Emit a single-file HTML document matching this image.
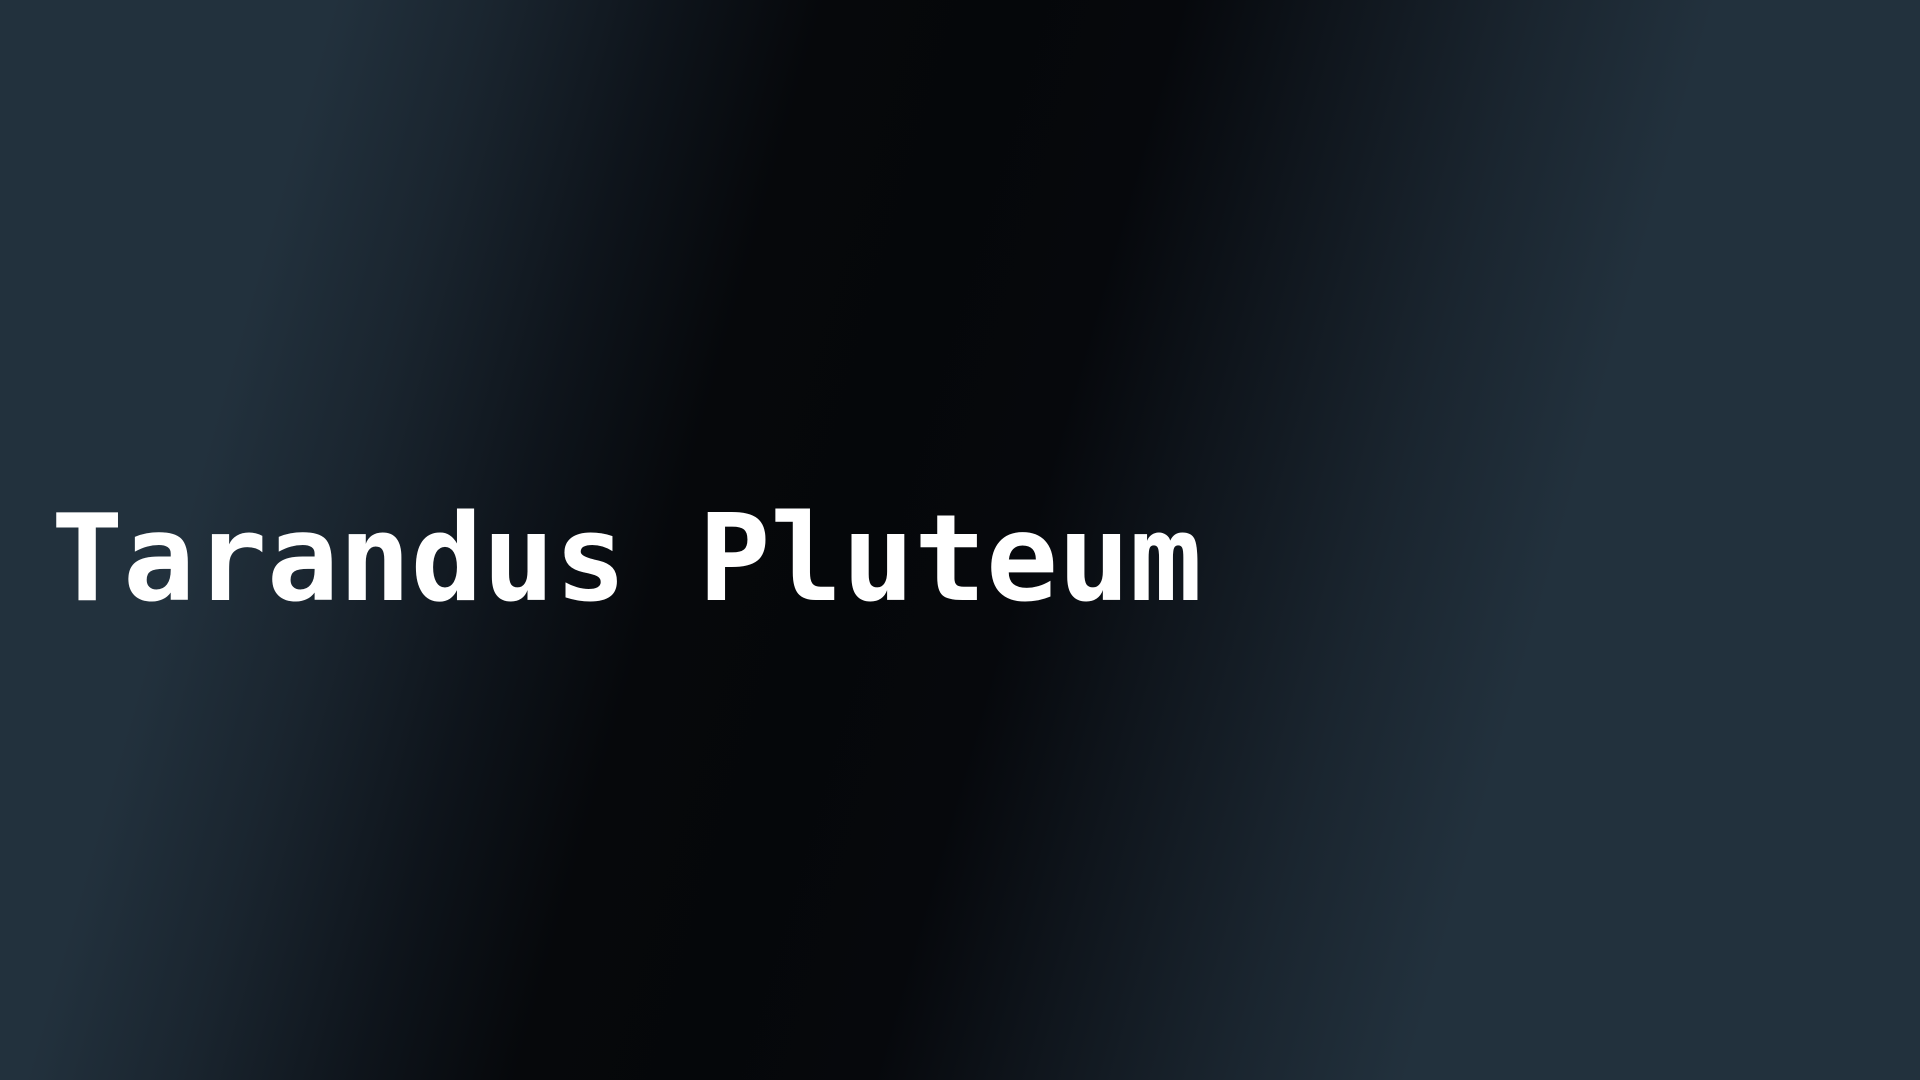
<!DOCTYPE html>
<html>
<head>
<meta charset="utf-8">
<style>
html,body{margin:0;padding:0;}
body{
  width:1920px;height:1080px;overflow:hidden;position:relative;
  background:linear-gradient(106deg,#22313d 0%,#22313d 15%,#1a252f 22%,#0e141b 30%,#06080b 37%,#05070a 45%,#06080c 53%,#0f151c 60%,#1a252f 69%,#22313d 77%,#22313d 100%);
}
h1{
  position:absolute;left:51px;top:500px;margin:0;
  font-family:"DejaVu Sans Mono","Liberation Mono",monospace;
  font-weight:bold;font-size:120px;line-height:120px;color:#fff;
  white-space:pre;letter-spacing:-0.33px;
}
</style>
</head>
<body>
<h1>Tarandus Pluteum</h1>
</body>
</html>
